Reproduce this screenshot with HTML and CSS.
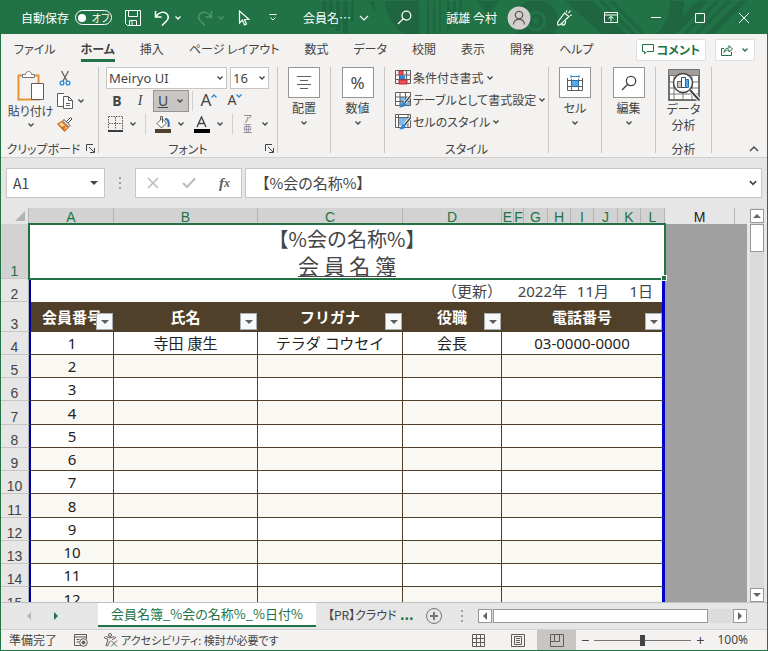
FILE: index.html
```html
<!DOCTYPE html>
<html lang="ja">
<head>
    <meta charset="UTF-8">
    <meta name="viewport" content="width=device-width, initial-scale=1.0">
    <title>会員名簿</title>
    <link rel="stylesheet" href="styles.css">
</head>
<body>
    <svg class="sprite" aria-hidden="true">
        <symbol id="chev" viewBox="0 0 8 8"><path d="M1.500 2.500 4 5l2.500-2.500" fill="none" stroke="currentColor" stroke-width="1.300"/></symbol>
        <symbol id="tri" viewBox="0 0 8 8"><path d="M0 2h8L4 6z" fill="currentColor"/></symbol>
        <symbol id="launcher" viewBox="0 0 9 9"><path d="M.5 7V.5H7M3 3l5 5M8.500 4v4.500H4" fill="none" stroke="currentColor"/></symbol>
        <symbol id="lens" viewBox="0 0 16 16"><circle cx="10" cy="6" r="4.700" fill="none" stroke="currentColor" stroke-width="1.300"/><path d="M6.500 9.500 1 15" stroke="currentColor" stroke-width="1.400"/></symbol>
    </svg>

    <!-- Title bar -->
    <header class="titlebar">
        <svg class="pattern" viewBox="0 0 458 33" aria-hidden="true">
            <g fill="#1e6540">
                <path d="M13 0h5v22h-5zM20 0h4v26h-4zM27 0h4v30h-4zM34 0h5v32h-5zM42 0h3v20h-3zM60 0h6v12zM76 0h34v34H96C84 26 77 14 76 0zM118 0h2v34h-2zM124 0h2v34h-2zM130 0h2v34h-2zM138 0h3v28h-3zM144 0h3v24h-3zM150 0h3v20h-3zM168 0h22l-11 14z"/>
                <path d="M256 0h28l34 34h-24zM290 0h4l34 34h-5zM300 0h4l34 34h-5zM346 34c10-8 15-20 15-34h14c0 14-4 26-11 34z"/>
                <path d="M384 4l8-4h8l-34 34h-8zM406 0h5l-34 34h-5zM418 0h5l-34 34h-5zM430 0h8l-34 34h-8z"/>
            </g>
            <g fill="none" stroke="#1e6540">
                <circle cx="227" cy="20" r="16" stroke-width="11"/>
                <circle cx="227" cy="20" r="5" stroke-width="4"/>
            </g>
        </svg>
        <div class="quick">
            <label class="autosave">自動保存 <button class="switch"><i></i>オフ</button></label>
            <button aria-label="保存"><svg width="16" height="16" viewBox="0 0 16 16" fill="none" stroke="currentColor"><path d="M.5.5h15v15H2.500l-2-2zM3.500.5v6h9v-6M4.500 15.500v-5h7v5M7 11v4"/></svg></button>
            <button class="with-chev" aria-label="元に戻す"><svg width="16" height="16" viewBox="0 0 16 16" fill="none" stroke="currentColor" stroke-width="1.500"><path d="M1.500 1v6h6M2 6.500C5 2 10 1 12.500 3.500s2 5.500 0 7.500L8 15.500"/></svg><svg width="8" height="8"><use href="#chev"/></svg></button>
            <button class="with-chev dim" aria-label="やり直し"><svg width="16" height="16" viewBox="0 0 16 16" fill="none" stroke="currentColor" stroke-width="1.500"><path d="M14.500 1v6h-6M14 6.500C11 2 6 1 3.500 3.500s-2 5.500 0 7.500L8 15.500"/></svg><svg width="8" height="8"><use href="#chev"/></svg></button>
            <button aria-label="選択"><svg width="12" height="16" viewBox="0 0 12 16" fill="none" stroke="currentColor" stroke-width="1.200"><path d="M1.500 1v12l3-3 2 5 2-1-2-4.500H11z"/></svg></button>
            <button aria-label="カスタマイズ"><svg width="8" height="8" viewBox="0 0 8 8" fill="none" stroke="currentColor"><path d="M.5.5h7M1.500 3.500 4 6l2.500-2.500"/></svg></button>
        </div>
        <button class="doc">会員名… <svg width="10" height="8" viewBox="0 0 10 8" fill="none" stroke="currentColor" stroke-width="1.200"><path d="m1 2 4 4 4-4"/></svg></button>
        <button class="search" aria-label="検索"><svg width="15" height="15"><use href="#lens"/></svg></button>
        <button class="user">誠雄 今村
            <svg width="24" height="24" viewBox="0 0 24 24" fill="none"><circle cx="12" cy="12" r="11.500" fill="#d2d0ce"/><g stroke="#605e5c" stroke-width="1.300"><circle cx="12" cy="9" r="3.700"/><path d="M6.500 18.500c0-7 11-7 11 0"/></g></svg>
        </button>
        <div class="window">
            <button aria-label="新機能"><svg width="16" height="16" viewBox="0 0 16 16" fill="none" stroke="currentColor" stroke-width="1.200"><path d="M1.500 12.500 8.500 3l4.500 3.500-8.500 8-2.500.5zM6 13.500c0 3 4 1.500 3.500-2.500M10.500 2.500v-2M12.500 3l2-2.500M14 5.500l2-.5"/></svg></button>
            <button aria-label="リボンの表示"><svg width="14" height="12" viewBox="0 0 14 12" fill="none" stroke="currentColor"><path d="M.5.5h13v10H.5zM.5 3h13M7 9.500v-5M4.500 6.500 7 4.500l2.500 2"/></svg></button>
            <button aria-label="最小化"><svg width="12" height="12" viewBox="0 0 12 12" stroke="currentColor"><path d="M1 5.500h10"/></svg></button>
            <button aria-label="最大化"><svg width="12" height="12" viewBox="0 0 12 12" fill="none" stroke="currentColor"><path d="M1.500 1.500h9v9h-9z"/></svg></button>
            <button aria-label="閉じる"><svg width="12" height="12" viewBox="0 0 12 12" stroke="currentColor"><path d="m1 1 10 10M11 1 1 11"/></svg></button>
        </div>
    </header>

    <!-- Ribbon tabs -->
    <nav class="menu">
        <a href="#">ファイル</a>
        <a href="#" class="active">ホーム</a>
        <a href="#">挿入</a>
        <a href="#">ページ レイアウト</a>
        <a href="#">数式</a>
        <a href="#">データ</a>
        <a href="#">校閲</a>
        <a href="#">表示</a>
        <a href="#">開発</a>
        <a href="#">ヘルプ</a>
        <div class="menu-right">
            <button class="comment"><svg width="12" height="11" viewBox="0 0 12 11" fill="none" stroke="currentColor"><path d="M.5.5h11v7H5l-2.500 2.500V7.500h-2z"/></svg>コメント</button>
            <button aria-label="共有"><svg width="12" height="12" viewBox="0 0 12 12" fill="none" stroke="currentColor"><path d="M3 4.500H.5v7h10V8M3 8.500c0-3 2-4.500 5-4.500V1.500L11.500 5 8 8V6C6 6 4 6.500 3 8.500z"/></svg><svg width="8" height="8"><use href="#chev"/></svg></button>
        </div>
    </nav>

    <!-- Ribbon -->
    <section class="ribbon">
        <div class="group clipboard">
            <div class="group-body">
                <button class="paste">
                    <svg width="28" height="30" viewBox="0 0 28 30"><path d="M1.500 4.500h20v24h-20z" fill="#fff" stroke="#e8912d" stroke-width="2"/><path d="M3 6h17v21H3z" fill="#f3f2f1"/><path d="M5.500 6.500v-3h3c0-4 6-4 6 0h3v3z" fill="#fff" stroke="#797775"/><path d="M14.500 12.500h12v16h-12z" fill="#fff" stroke="#605e5c"/></svg>
                    貼り付け
                    <svg width="8" height="8"><use href="#chev"/></svg>
                </button>
                <div class="stack">
                    <button aria-label="切り取り"><svg width="16" height="16" viewBox="0 0 16 16" fill="none"><path d="m4.500 1 5.500 10M11.500 1 6 11" stroke="#605e5c" stroke-width="1.300"/><g stroke="#2b88d8" stroke-width="1.300"><circle cx="5" cy="13" r="1.900"/><circle cx="11" cy="13" r="1.900"/></g></svg></button>
                    <button class="with-chev" aria-label="コピー"><svg width="16" height="16" viewBox="0 0 16 16" fill="#fff" stroke="#605e5c"><path d="M7 .5H.5v13H6"/><path d="M6.500 3.500h5l4 4v8h-9zM11.500 3.500v4h4M9 10.500h4M9 12.500h4"/></svg><svg width="8" height="8"><use href="#chev"/></svg></button>
                    <button aria-label="書式のコピー"><svg width="16" height="16" viewBox="0 0 16 16"><path d="m9 6 4.500-4.500 1.500 1.500L10.500 7.500" fill="#fff" stroke="#444"/><path d="m7 3.500 6 6-1.500 1.500-6-6z" fill="#fff" stroke="#444"/><path d="M5 5.500 1 8l6.500 7L11 11.500z" fill="#fbd5a8" stroke="#d8701a" stroke-width="1.300"/><path d="m4 11 5-1.500-2 5z" fill="#d8701a"/></svg></button>
                </div>
            </div>
            <div class="group-label">クリップボード</div>
            <button class="launch" aria-label="クリップボードの設定"><svg width="9" height="9"><use href="#launcher"/></svg></button>
        </div>

        <div class="group font">
            <div class="font-row">
                <span class="combo"><select class="family" aria-label="フォント名"><option>Meiryo UI</option></select><svg width="8" height="8"><use href="#chev"/></svg></span>
                <span class="combo"><select class="size" aria-label="フォント サイズ"><option>16</option></select><svg width="8" height="8"><use href="#chev"/></svg></span>
            </div>
            <div class="font-row letters-row">
                <button class="letter bold">B</button>
                <button class="letter italic">I</button>
                <button class="letter underline on"><u>U</u><svg width="8" height="8"><use href="#chev"/></svg></button>
                <i class="sep"></i>
                <button class="letter grow">A<svg width="6" height="6" viewBox="0 0 6 6" fill="none" stroke="#2b88d8" stroke-width="1.300"><path d="m.5 4.500 2.500-2.500 2.500 2.500"/></svg></button>
                <button class="letter shrink">A<svg width="6" height="6" viewBox="0 0 6 6" fill="none" stroke="#2b88d8" stroke-width="1.300"><path d="m.5 1.500 2.500 2.500 2.500-2.500"/></svg></button>
            </div>
            <div class="font-row icons">
                <button class="with-chev" aria-label="罫線"><svg width="15" height="16" viewBox="0 0 15 16" fill="none" stroke="#605e5c"><path d="M.5.5h14v13M.5.5v13M7.500 1v12M1 7.500h13" stroke-dasharray="1.500 1"/><path d="M0 15h15" stroke="#000" stroke-width="1.500"/></svg><svg width="8" height="8"><use href="#chev"/></svg></button>
                <i class="sep"></i>
                <button class="with-chev" aria-label="塗りつぶしの色"><svg width="17" height="17" viewBox="0 0 17 17"><path d="m3 7.500 5-5 4.500 4.500-5 5zM6.500 4V.5h2V7" fill="#fff" stroke="#605e5c"/><path d="M11 3c4 0 4 4 3.500 8" fill="none" stroke="#2b6cb0" stroke-width="2"/><path d="M1 13h16v4H1z" fill="#50402a"/></svg><svg width="8" height="8"><use href="#chev"/></svg></button>
                <button class="with-chev" aria-label="フォントの色"><svg width="17" height="17" viewBox="0 0 17 17"><path d="m4 11 4.500-10L13 11M5.500 7.500h6" fill="none" stroke="#444" stroke-width="1.400"/><path d="M1 13h16v4H1z"/></svg><svg width="8" height="8"><use href="#chev"/></svg></button>
                <i class="sep"></i>
                <button class="with-chev ruby"><span>ア<br>亜</span><svg width="8" height="8"><use href="#chev"/></svg></button>
            </div>
            <div class="group-label">フォント</div>
            <button class="launch" aria-label="フォントの設定"><svg width="9" height="9"><use href="#launcher"/></svg></button>
        </div>

        <div class="group narrow">
            <button class="big"><span class="frame"><svg width="14" height="14" viewBox="0 0 14 14" stroke="#605e5c"><path d="M0 .5h14M3 4.500h8M0 8.500h14M3 12.500h8"/></svg></span>配置<svg width="8" height="8"><use href="#chev"/></svg></button>
        </div>
        <div class="group narrow">
            <button class="big"><span class="frame">%</span>数値<svg width="8" height="8"><use href="#chev"/></svg></button>
        </div>

        <div class="group style">
            <button><svg width="16" height="16" viewBox="0 0 16 16" fill="none"><path d="M.5.5h15v13H.5zM.5 5h15M.5 9.500h15M4.500 0v14M11.500 0v14" stroke="#605e5c"/><path d="M4 1h4v4H4zM4 10h8v4H4z" fill="#e8505b" stroke="#c4262e"/><path d="M5 5.500h5V9H5z" fill="#2b88d8"/></svg>条件付き書式<svg width="8" height="8"><use href="#chev"/></svg></button>
            <button><svg width="16" height="16" viewBox="0 0 16 16" fill="none"><path d="M.5.5h15v13H.5z" fill="#fff" stroke="#605e5c"/><path d="M5 5h10v8H5z" fill="#7cb8ea"/><path d="M.5 5h15M.5 9.500h15M5 0v14M10.500 0v14" stroke="#605e5c"/><path d="m15.500 4-7 8" stroke="#fff" stroke-width="3"/><path d="m15.500 4-6 7" stroke="#444" stroke-width="1.500"/><path d="M4 15.500c4 0 6.500-1 6.500-4l-2-1.500c-2.500 1-2 4-4.500 5.500z" fill="#2b88d8"/></svg>テーブルとして書式設定<svg width="8" height="8"><use href="#chev"/></svg></button>
            <button><svg width="16" height="16" viewBox="0 0 16 16" fill="none"><path d="M.5.5h15v13H.5z" fill="#fff" stroke="#605e5c"/><path d="M3 3.500h10v8H3z" fill="#7cb8ea"/><path d="M.5 3.500h15M3.500 0v14M13 0v14" stroke="#605e5c"/><path d="m15.500 4-7 8" stroke="#fff" stroke-width="3"/><path d="m15.500 4-6 7" stroke="#444" stroke-width="1.500"/><path d="M4 15.500c4 0 6.500-1 6.500-4l-2-1.500c-2.500 1-2 4-4.500 5.500z" fill="#2b88d8"/></svg>セルのスタイル<svg width="8" height="8"><use href="#chev"/></svg></button>
            <div class="group-label">スタイル</div>
        </div>

        <div class="group narrow">
            <button class="big"><span class="frame"><svg width="16" height="16" viewBox="0 0 16 16" fill="none"><path d="M.5 3v12.500h15V3M.5 5.500h15M.5 11.500h15M4.500 4v11M11.500 4v11" stroke="#605e5c"/><path d="M4.500 5.500h7v6h-7z" fill="#5aa7e6" stroke="#1f6fb5"/><path d="M4 1.500h8M4 0v3M12 0v3" stroke="#2b88d8"/></svg></span>セル<svg width="8" height="8"><use href="#chev"/></svg></button>
        </div>
        <div class="group narrow">
            <button class="big"><span class="frame"><svg width="16" height="16"><use href="#lens"/></svg></span>編集<svg width="8" height="8"><use href="#chev"/></svg></button>
        </div>
        <div class="group analysis">
            <button class="big">
                <svg width="32" height="32" viewBox="0 0 32 32" fill="none"><path d="M1 1h30v30H1z" fill="#fff" stroke="#444" stroke-width="1.500"/><path d="M1 1h30v5H1z" fill="#a19f9d"/><path d="M1 6.500h30M1 13h30M1 19h30M1 25h30M6 6v25M15 22v9M24 6v25" stroke="#797775"/><circle cx="15" cy="14" r="9.500" fill="#fff" stroke="#444" stroke-width="1.500"/><path d="m22 21 9 10" stroke="#fff" stroke-width="4"/><path d="m22 21 9 10" stroke="#444" stroke-width="2"/><path d="M9.500 12.500h4v6h-4z" fill="#c8c6c4" stroke="#605e5c"/><path d="M13.500 8.500h4v10h-4z" fill="#fff" stroke="#444"/><path d="M17.500 10.500h3v8h-3z" fill="#5aa7e6" stroke="#1f6fb5"/></svg>
                <span>データ</span>
                <span>分析</span>
            </button>
            <div class="group-label">分析</div>
        </div>
        <button class="collapse" aria-label="リボンを折りたたむ"><svg width="10" height="8" viewBox="0 0 10 8" fill="none" stroke="currentColor" stroke-width="1.400"><path d="m1 6 4-4 4 4"/></svg></button>
    </section>

    <!-- Formula bar -->
    <section class="formula">
        <div class="namebox"><input value="A1" aria-label="名前ボックス"><svg width="8" height="8"><use href="#tri"/></svg></div>
        <span class="dots"></span>
        <div class="fx">
            <button aria-label="キャンセル"><svg width="12" height="12" viewBox="0 0 12 12" stroke="#bdbbb9" stroke-width="1.500"><path d="m1 1 10 10M11 1 1 11"/></svg></button>
            <button aria-label="入力"><svg width="14" height="12" viewBox="0 0 14 12" fill="none" stroke="#bdbbb9" stroke-width="2"><path d="m1 6 4 4 8-8.500"/></svg></button>
            <button class="fn">f<sub>x</sub></button>
        </div>
        <div class="expr"><input value="【%会の名称%】" aria-label="数式バー"><svg width="10" height="10"><use href="#chev"/></svg></div>
    </section>

    <!-- Sheet -->
    <main class="work">
        <div class="sheet">
            <table>
                <colgroup>
                    <col class="c-num"><col class="c-a"><col class="c-b"><col class="c-c"><col class="c-d"><col class="c-e"><col class="c-f">
                    <col class="c-g"><col class="c-h"><col class="c-h"><col class="c-g"><col class="c-h"><col class="c-g"><col class="c-m"><col>
                </colgroup>
                <thead>
                    <tr class="letters">
                        <th class="corner"><svg width="10" height="10" viewBox="0 0 10 10"><path d="M10 0v10H0z" fill="#b4b4b4"/></svg></th>
                        <th>A</th><th>B</th><th>C</th><th>D</th><th>E</th><th>F</th><th>G</th><th>H</th><th>I</th><th>J</th><th>K</th><th>L</th>
                        <th class="plain">M</th><th class="plain last"></th>
                    </tr>
                </thead>
                <tbody id="rows">
                    <tr class="title">
                        <th class="sel">1</th>
                        <td colspan="12">【%会の名称%】<br><u>会 員 名 簿</u><span class="handle"></span></td>
                    </tr>
                    <tr class="date">
                        <th>2</th>
                        <td class="first" colspan="3"></td>
                        <td class="note">（更新）</td>
                        <td class="year" colspan="4">2022年</td>
                        <td colspan="2">11月</td>
                        <td colspan="2" class="end">1日</td>
                    </tr>
                    <tr class="head">
                        <th>3</th>
                        <td class="first">会員番号<button class="filter" aria-label="絞り込み"><svg width="8" height="8"><use href="#tri"/></svg></button></td>
                        <td>氏名<button class="filter" aria-label="絞り込み"><svg width="8" height="8"><use href="#tri"/></svg></button></td>
                        <td>フリガナ<button class="filter" aria-label="絞り込み"><svg width="8" height="8"><use href="#tri"/></svg></button></td>
                        <td>役職<button class="filter" aria-label="絞り込み"><svg width="8" height="8"><use href="#tri"/></svg></button></td>
                        <td colspan="8" class="end">電話番号<button class="filter" aria-label="絞り込み"><svg width="8" height="8"><use href="#tri"/></svg></button></td>
                    </tr>
                    <tr><th>4</th><td class="first">1</td><td>寺田 康生</td><td>テラダ コウセイ</td><td>会長</td><td colspan="8" class="end">03-0000-0000</td></tr>
                </tbody>
            </table>
        </div>
        <div class="vscroll">
            <button aria-label="上へ"><svg width="8" height="8" viewBox="0 0 8 8"><path d="M0 6h8L4 2z"/></svg></button>
            <div class="thumb"></div>
            <button class="down" aria-label="下へ"><svg width="8" height="8"><use href="#tri"/></svg></button>
        </div>
    </main>

    <!-- Sheet tabs -->
    <footer class="tabs">
        <div class="tab-nav">
            <button aria-label="前のシート"><svg width="6" height="8" viewBox="0 0 6 8"><path d="M5 0v8L1 4z" fill="#b4b4b4"/></svg></button>
            <button aria-label="次のシート"><svg width="6" height="8" viewBox="0 0 6 8"><path d="M1 0v8l4-4z" fill="#217346"/></svg></button>
        </div>
        <button class="tab active">会員名簿_%会の名称%_%日付%</button>
        <button class="tab next">【PR】クラウド</button>
        <button class="more">...</button>
        <button class="add" aria-label="新しいシート"><svg width="16" height="16" viewBox="0 0 16 16" fill="none" stroke="#797775"><circle cx="8" cy="8" r="7.500"/><path d="M8 4v8M4 8h8" stroke-width="2"/></svg></button>
        <span class="dots"></span>
        <div class="hscroll">
            <button aria-label="左へ"><svg width="6" height="8" viewBox="0 0 6 8"><path d="M5 0v8L1 4z"/></svg></button>
            <div class="thumb"></div>
            <button class="right" aria-label="右へ"><svg width="6" height="8" viewBox="0 0 6 8"><path d="M1 0v8l4-4z"/></svg></button>
        </div>
    </footer>

    <!-- Status bar -->
    <div class="status">
        <span class="ready">準備完了</span>
        <svg width="14" height="13" viewBox="0 0 14 13" fill="none" stroke="#605e5c"><path d="M7 11.500H.5V.5h12V5M.5 3h12M2.500 5.500h3M2.500 8h3"/><circle cx="9.500" cy="8.500" r="3.800"/><circle cx="9.500" cy="8.500" r="1.500" fill="#605e5c"/></svg>
        <button class="access"><svg width="14" height="14" viewBox="0 0 14 14" fill="none" stroke="#605e5c"><circle cx="6" cy="2" r="1.500"/><path d="M1 3.500 .5 5l3.500 1.500-2 6 1.500.5 2.500-5M11 3.500l.5 1.500L8 6.500M2 3.500l4 1.500 4-1.500M7 7.500l6 6M13 7.500l-6 6"/></svg>アクセシビリティ: 検討が必要です</button>
        <div class="views">
            <button aria-label="標準"><svg width="13" height="13" viewBox="0 0 13 13" fill="none" stroke="#605e5c"><path d="M.5.5h12v12H.5zM.5 4.500h12M.5 8.500h12M4.500 0v13M8.500 0v13"/></svg></button>
            <button aria-label="ページ レイアウト"><svg width="14" height="13" viewBox="0 0 14 13" fill="none" stroke="#605e5c"><path d="M.5.5h13v12H.5zM3.500 2.500h7v8h-7zM5 4.500h4M5 6.500h4M5 8.500h4"/></svg></button>
            <button class="on" aria-label="改ページ プレビュー"><svg width="14" height="13" viewBox="0 0 14 13" fill="none" stroke="#605e5c"><path d="M.5.5h13v12H.5zM4.500.5v7M9.500.5v7M.5 7.500h9"/></svg></button>
        </div>
        <div class="zoom">
            <button>−</button>
            <input type="range" min="0" max="200" value="100" aria-label="ズーム">
            <button>+</button>
            <span>100%</span>
        </div>
    </div>

    <script>
        // 空の行を追加
        const rows = document.getElementById('rows');
        for (let n = 2; n <= 12; n++) {
            const tr = document.createElement('tr');
            if (n % 4 === 0) tr.className = 'tall';
            tr.innerHTML = `<th>${n + 3}</th><td class="first">${n}</td><td></td><td></td><td></td><td colspan="8" class="end"></td>`;
            rows.appendChild(tr);
        }
    </script>
</body>
</html>
```
FILE: styles.css
```css
* {
    box-sizing: border-box;
    margin: 0;
    padding: 0;
}

body {
    font-family: "Noto Sans CJK JP", sans-serif;
    font-feature-settings: "palt";
    font-size: 12px;
    line-height: 16px;
    color: #444;
    background: #e6e6e6;
    border: 1px solid #217346;
    height: 100vh;
    display: flex;
    flex-direction: column;
    overflow: hidden;
}

button, input, select {
    font: inherit;
    font-feature-settings: inherit;
    color: inherit;
    background: none;
    border: none;
}

button {
    display: flex;
    align-items: center;
    justify-content: center;
    white-space: nowrap;
}

svg {
    display: block;
    flex: none;
}

.sprite {
    position: absolute;
    width: 0;
    height: 0;
}

/* Title bar */
.titlebar {
    position: relative;
    display: flex;
    align-items: center;
    height: 33px;
    flex: none;
    padding: 0 17px 0 20px;
    background: #217346;
    color: #fff;
    overflow: hidden;
}

.titlebar > * {
    position: relative;
}

.titlebar .pattern {
    position: absolute;
    right: 0;
    top: 0;
    width: 458px;
    height: 33px;
}

.quick {
    display: flex;
    align-items: center;
    gap: 13px;
}

.autosave {
    display: flex;
    align-items: center;
    gap: 6px;
}

.switch {
    width: 37px;
    height: 15px;
    border: 1px solid #fff;
    border-radius: 8px;
    font-size: 10px;
    gap: 6px;
}

.switch i {
    width: 8px;
    height: 8px;
    border-radius: 50%;
    background: #fff;
}

.with-chev {
    gap: 4px;
}

.dim {
    color: #4f9470;
}

.quick > button:nth-child(3) {
    margin-right: 2px;
}

.quick > button:nth-child(5) {
    margin-right: 6px;
}

.doc {
    gap: 8px;
    margin-left: 26px;
}

.search {
    margin-left: auto;
}

.user {
    gap: 10px;
    margin-left: 34px;
}

.window {
    display: flex;
    align-items: center;
    gap: 32px;
    margin-left: 25px;
}

/* Ribbon tabs */
.menu {
    display: flex;
    align-items: center;
    gap: 25px;
    height: 31px;
    flex: none;
    padding: 0 12px 0 13px;
    background: #f3f2f1;
    white-space: nowrap;
}

.menu a {
    color: #444;
    text-decoration: none;
    padding: 4px 0 2px;
    border-bottom: 3px solid transparent;
}

.menu a.active {
    font-weight: 700;
    border-color: #217346;
}

.menu-right {
    display: flex;
    gap: 9px;
    margin-left: auto;
    color: #217346;
}

.menu-right button {
    height: 22px;
    padding: 0 5px;
    gap: 8px;
    background: #fff;
    border: 1px solid #e1dfdd;
    border-radius: 2px;
}

.menu-right .comment {
    font-weight: 700;
    gap: 3px;
}

/* Ribbon */
.ribbon {
    position: relative;
    display: flex;
    height: 93px;
    flex: none;
    padding: 2px 0 4px;
    background: #f3f2f1;
    border-bottom: 1px solid #d2d0ce;
}

.group {
    position: relative;
    flex: none;
    border-right: 1px solid #c8c6c4;
}

.group-label {
    position: absolute;
    left: 0;
    right: 0;
    bottom: -4px;
    text-align: center;
}

.launch {
    position: absolute;
    right: 3px;
    bottom: 0;
}

.clipboard {
    width: 98px;
}

.clipboard .group-label {
    right: 12px;
}

.group-body {
    display: flex;
    gap: 6px;
    padding-left: 9px;
}

.paste {
    flex-direction: column;
    justify-content: flex-start;
    padding-top: 4px;
    gap: 2px;
    width: 41px;
}

.stack {
    display: flex;
    flex-direction: column;
    align-items: flex-start;
    gap: 7px;
    padding-top: 3px;
}

.font {
    width: 179px;
    padding-left: 7px;
}

.font-row {
    display: flex;
    align-items: center;
    gap: 3px;
    height: 22px;
    margin-bottom: 1px;
}

.letters-row {
    padding-left: 1px;
}

.combo {
    position: relative;
}

.combo select {
    appearance: none;
    display: block;
    height: 22px;
    padding: 0 2px;
    background: #fff;
    border: 1px solid #c8c6c4;
    font: 13px "Noto Sans", sans-serif;
}

.combo svg {
    position: absolute;
    right: 3px;
    top: 7px;
}

.family {
    width: 121px;
}

.size {
    width: 39px;
}

.letter {
    width: 20px;
    height: 22px;
    font-family: "Noto Sans", sans-serif;
    font-size: 14px;
}

.bold {
    font-weight: 700;
}

.italic {
    font-family: "Liberation Serif", serif;
    font-style: italic;
}

.underline {
    width: 36px;
    gap: 8px;
}

.on {
    background: #c8c6c4;
}

.underline.on {
    border: 1px solid #979593;
}

.grow, .shrink {
    align-items: flex-start;
    line-height: 20px;
}

.grow {
    width: 26px;
    font-size: 17px;
}

.grow svg, .shrink svg {
    margin-top: 3px;
}

.sep {
    width: 1px;
    height: 20px;
    background: #d2d0ce;
}

.icons {
    gap: 8px;
    padding-left: 2px;
}

.icons .with-chev {
    gap: 6px;
}

.ruby span {
    font-size: 9px;
    line-height: 10px;
    color: #797775;
    padding: 0 3px 0 2px;
}

.narrow {
    width: 53px;
}

.narrow:nth-child(4), .narrow:nth-child(7) {
    width: 54px;
}

.big {
    flex-direction: column;
    width: 100%;
}

.big > svg:last-child {
    margin-top: 3px;
}

.frame {
    display: flex;
    align-items: center;
    justify-content: center;
    width: 32px;
    height: 31px;
    margin-bottom: 2px;
    background: #fff;
    border: 1px solid #979593;
    font-family: "Noto Sans", sans-serif;
    font-size: 17px;
}

.style {
    width: 164px;
    padding-left: 10px;
}

.style button {
    gap: 2px;
    height: 22px;
}

.analysis {
    width: 56px;
}

.analysis .big {
    padding-top: 2px;
}

/* Formula bar and collapse arrow */
.collapse {
    margin: auto 8px 0 auto;
}

.formula {
    display: flex;
    height: 50px;
    flex: none;
    padding: 10px 5px 10px;
}

.namebox, .fx, .expr {
    display: flex;
    align-items: center;
    background: #fff;
    border: 1px solid #c8c6c4;
}

.namebox {
    width: 99px;
    padding: 0 6px;
}

.namebox input {
    width: 100%;
    font-size: 14px;
}

.dots {
    width: 2px;
    height: 12px;
    align-self: center;
    background: repeating-linear-gradient(#a19f9d 0 2px, transparent 2px 5px);
}

.formula .dots {
    margin: 0 14px;
}

.fx {
    width: 107px;
    justify-content: space-between;
    padding: 0 11px;
}

.fn {
    font: italic 700 15px "Liberation Serif", serif;
    color: #605e5c;
}

.fn sub {
    font-size: 12px;
}

.expr {
    flex: 1;
    margin-left: 3px;
    padding: 0 3px 0 16px;
}

.expr input {
    flex: 1;
    font-size: 15px;
}

/* Sheet */
.work {
    display: flex;
    flex: 1;
    min-height: 0;
}

.sheet {
    flex: 1;
    overflow: hidden;
    background: #a0a0a0;
}

table {
    width: 100%;
    table-layout: fixed;
    border-collapse: separate;
    border-spacing: 0;
}

.c-num { width: 28px; }
.c-a { width: 85px; }
.c-b { width: 144px; }
.c-c { width: 145px; }
.c-d { width: 99px; }
.c-e { width: 12px; }
.c-f { width: 10px; }
.c-g { width: 24px; }
.c-h { width: 23px; }
.c-m { width: 70px; }

th {
    font: 14px "Liberation Sans", sans-serif;
    line-height: 14px;
    vertical-align: bottom;
    background: #e6e6e6;
    border-right: 1px solid #b4b4b4;
    border-bottom: 1px solid #c8c6c4;
}

.letters th {
    height: 16px;
    color: #217346;
    background: #d2d2d2;
    border-bottom: none;
}

.letters .plain, .letters .corner {
    color: #222;
    background: #e6e6e6;
}

.letters .last {
    border-right: none;
}

.corner svg {
    margin: 0 3px 3px auto;
}

tbody th.sel {
    color: #217346;
    background: #d2d2d2;
}

td {
    position: relative;
    height: 23px;
    font: 15px "Noto Sans", "Noto Sans CJK JP", sans-serif;
    line-height: 20px;
    text-align: center;
    color: #222;
    background: #fff;
    border-right: 1px solid #50402a;
    border-bottom: 1px solid #50402a;
    white-space: nowrap;
}

tbody tr:nth-child(n+5):nth-child(odd) td {
    background: #faf8f3;
}

tbody .tall td {
    height: 24px;
}

tbody td.first {
    border-left: 2px solid #0000a0;
}

tbody td.end {
    border-right: 3px solid #0000d0;
}

.title td {
    z-index: 1;
    height: 55px;
    border: none;
    outline: 2px solid #217346;
    outline-offset: -1px;
    font: 20px "Noto Sans CJK JP", sans-serif;
    line-height: 27px;
    color: #444;
}

.title u {
    font-size: 21px;
    text-decoration-thickness: 1px;
    text-underline-offset: 2px;
}

.handle {
    position: absolute;
    right: -2px;
    bottom: -2px;
    width: 6px;
    height: 6px;
    background: #217346;
    border: 1px solid #fff;
}

.date td {
    border: none;
    text-align: right;
    padding-right: 9px;
    color: #444;
}

.date .note {
    padding-right: 0;
}

.date .year {
    padding-right: 4px;
}

tbody .head td {
    height: 30px;
    font-weight: 700;
    color: #fff;
    background: #50402a;
    border-right-color: #50402a;
}

tbody .head .end {
    border-right-color: #0000d0;
}

.filter {
    position: absolute;
    right: 0;
    bottom: 1px;
    width: 17px;
    height: 17px;
    background: #f6f8fa;
    border: 1px solid #a8b0b8;
    color: #605e5c;
}

/* Scroll bars */
.vscroll {
    display: flex;
    flex-direction: column;
    align-items: center;
    width: 20px;
    padding-top: 1px;
    background: linear-gradient(#dadada, #dadada) center / 14px 100% no-repeat;
}

.vscroll button, .hscroll button {
    width: 14px;
    height: 14px;
    flex: none;
    background: #fff;
    border: 1px solid #979797;
}

.vscroll svg, .hscroll svg {
    fill: #666;
    color: #666;
}

.thumb {
    background: #fff;
    border: 1px solid #979797;
}

.vscroll .thumb {
    width: 14px;
    height: 28px;
    margin-top: 1px;
}

.vscroll .down {
    margin-top: auto;
}

/* Sheet tabs */
.tabs {
    display: flex;
    align-items: center;
    height: 27px;
    flex: none;
    padding-right: 20px;
    border-top: 1px solid #c0c0c0;
}

.tab-nav {
    display: flex;
    gap: 21px;
    width: 97px;
    padding-left: 25px;
}

.tab {
    align-self: flex-start;
    height: 24px;
    font-size: 13px;
}

.tab.active {
    padding: 0 13px;
    color: #217346;
    background: #fff;
    border-bottom: 2px solid #217346;
}

.next {
    justify-content: flex-start;
    width: 80px;
    padding-left: 12px;
    overflow: hidden;
    font-size: 12px;
}

.more {
    padding: 0 12px 4px 4px;
    font-size: 14px;
    font-weight: 700;
    color: #217346;
}

.tabs .dots {
    margin: 0 15px 0 19px;
}

.hscroll {
    display: flex;
    flex: 1;
    gap: 1px;
    background: #dcdcdc;
}

.hscroll .thumb {
    width: 80%;
}

.hscroll .right {
    margin-left: auto;
}

/* Status bar */
.status {
    display: flex;
    align-items: center;
    height: 21px;
    flex: none;
    padding: 0 19px 0 8px;
    background: #f3f2f1;
    border-top: 1px solid #d2d0ce;
}

.ready {
    margin-right: 17px;
}

.access {
    gap: 3px;
    margin-left: 16px;
    font-size: 11px;
}

.views {
    display: flex;
    align-self: stretch;
    margin-left: auto;
}

.views button {
    width: 39px;
}

.zoom {
    display: flex;
    align-items: center;
    gap: 5px;
    margin-left: 5px;
}

.zoom button {
    width: 8px;
    font-size: 14px;
}

.zoom input {
    appearance: none;
    width: 97px;
    height: 12px;
    background: linear-gradient(#797775, #797775) center / 100% 1px no-repeat;
}

.zoom input::-webkit-slider-thumb {
    appearance: none;
    width: 5px;
    height: 11px;
    background: #444;
}

.zoom span {
    margin-left: 8px;
    font-family: "Noto Sans", sans-serif;
}
```
